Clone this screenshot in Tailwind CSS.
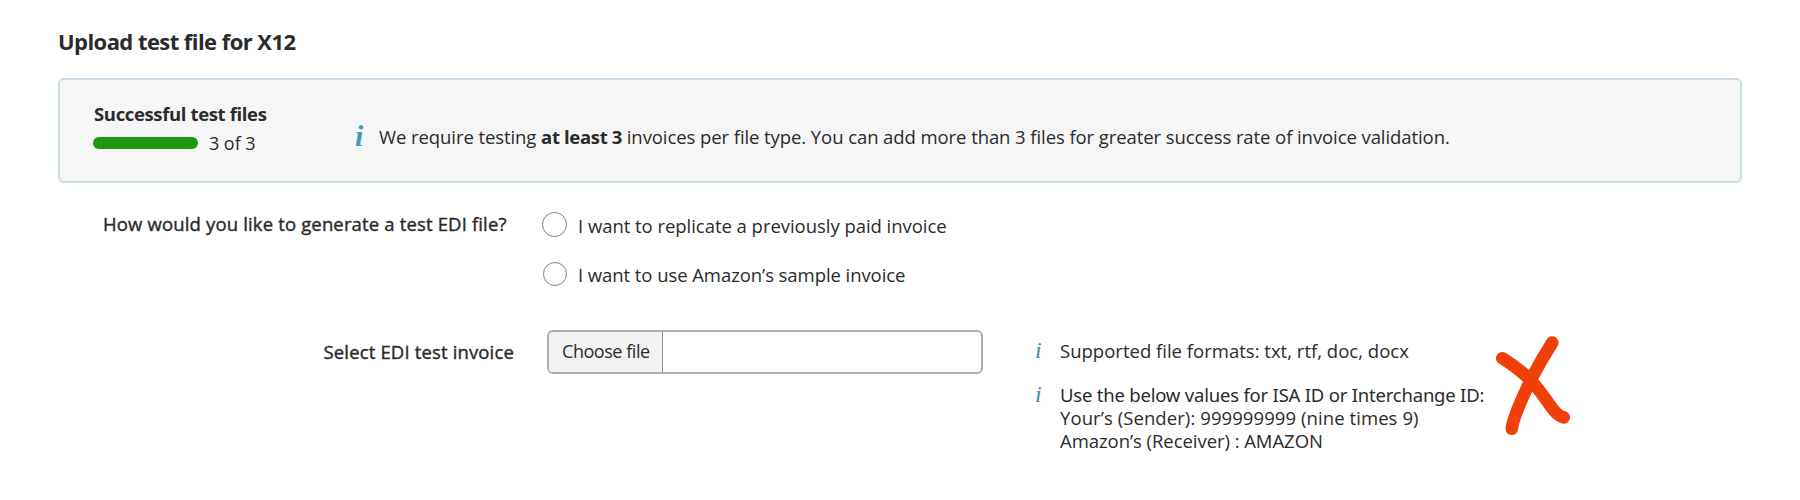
<!DOCTYPE html>
<html lang="en">
<head>
<meta charset="utf-8">
<title>Upload test file for X12</title>
<script src="https://cdn.jsdelivr.net/npm/@tailwindcss/browser@4"></script>
</head>
<body class="bg-white">
<main class="relative h-[500px] w-[1800px] overflow-hidden px-[58px] pt-[26px] font-['Open_Sans',sans-serif] text-[18.5px] leading-6 whitespace-nowrap text-[#2b2b2b]">
  <h1 class="text-[22px] leading-[30px] font-bold tracking-[-0.56px]">Upload test file for X12</h1>

  <section class="mt-[22px] flex h-[105px] rounded-md border-2 border-[#c9dde6] bg-[#f6f6f6]">
    <div class="w-[295px] pt-[22px] pl-[34px]">
      <h2 class="text-[18.5px] leading-6 font-bold tracking-[-0.36px]">Successful test files</h2>
      <div class="-ml-px mt-[5px] flex items-center">
        <div class="h-3 w-[104.5px] rounded-full bg-[#1d9610]"></div>
        <span class="ml-[11.5px] text-[18px] tracking-[-0.05px]">3 of 3</span>
      </div>
    </div>
    <div class="flex pt-[45px]">
      <span class="w-6 font-['Liberation_Serif',serif] text-[30px] leading-[22px] font-bold text-[#4599bb] italic">i</span>
      <p><span class="tracking-[-0.08px]">We require testing </span><b class="tracking-[-0.34px]">at least 3</b><span class="tracking-[-0.08px]"> invoices per file type. You can add more than 3 files for greater success rate of invoice validation.</span></p>
    </div>
  </section>

  <form>
    <div class="mt-[29px] flex">
      <p class="w-[484px] pl-[45px] font-medium tracking-[0.15px] [-webkit-text-stroke:0.4px_#2b2b2b]">How would you like to generate a test EDI file?</p>
      <div>
        <label class="flex h-[25px] items-center">
          <span class="size-[25px] rounded-full border-[1.5px] border-[#808080]"></span>
          <span class="relative top-px ml-[11px] tracking-[-0.04px]">I want to replicate a previously paid invoice</span>
        </label>
        <label class="mt-[25px] flex h-6 items-center">
          <span class="ml-[0.5px] size-6 rounded-full border-[1.5px] border-[#808080]"></span>
          <span class="relative top-px ml-[11.5px] tracking-[-0.07px]">I want to use Amazon’s sample invoice</span>
        </label>
      </div>
    </div>

    <div class="mt-[43px] flex pt-px">
      <p class="w-[489px] pt-[10px] pl-[265.5px] font-medium tracking-[0.15px] [-webkit-text-stroke:0.4px_#2b2b2b]">Select EDI test invoice</p>
      <div class="flex h-11 w-[436px] overflow-hidden rounded-md border-2 border-[#adadad]">
        <span class="w-[114px] border-r-[1.5px] border-[#909090] bg-[#f2f2f2] pt-[7px] pl-[13px] text-[18px] tracking-[-0.45px]">Choose file</span>
      </div>
      <div class="pt-[9px] pl-[52px]">
        <div class="flex">
          <span class="w-[25px] font-['Liberation_Serif',serif] text-[24px] leading-[23px] text-[#3d8fae] italic">i</span>
          <p class="tracking-[0.01px]">Supported file formats: txt, rtf, doc, docx</p>
        </div>
        <div class="mt-[19px] flex leading-[23px]">
          <span class="w-[25px] pt-px font-['Liberation_Serif',serif] text-[24px] leading-[23px] text-[#3d8fae] italic">i</span>
          <div class="pt-px">
            <p class="font-['Noto_Sans',sans-serif] tracking-[-0.21px]">Use the below values for ISA ID or Interchange ID:</p>
            <p class="tracking-[0.08px]">Your’s (Sender): 999999999 (nine times 9)</p>
            <p class="tracking-[-0.05px]">Amazon’s (Receiver) : AMAZON</p>
          </div>
        </div>
      </div>
    </div>
  </form>

  <!-- hand-drawn cross -->
  <svg class="absolute top-[330px] left-[1490px]" width="90" height="110" viewBox="1490 330 90 110" fill="none" stroke="#f03f08" stroke-width="12.6" stroke-linecap="round" stroke-linejoin="round">
    <path d="M1552.3 342.5C1545 354 1538 366 1531.5 378.500C1524 394 1512.500 419 1511.800 428.800"/>
    <path d="M1502.300 358.300C1512 364 1521.500 371.500 1530 379.500C1540 390 1547 401.500 1554 410.500C1557 414 1560 416.500 1563.700 417.400"/>
  </svg>
</main>
</body>
</html>
